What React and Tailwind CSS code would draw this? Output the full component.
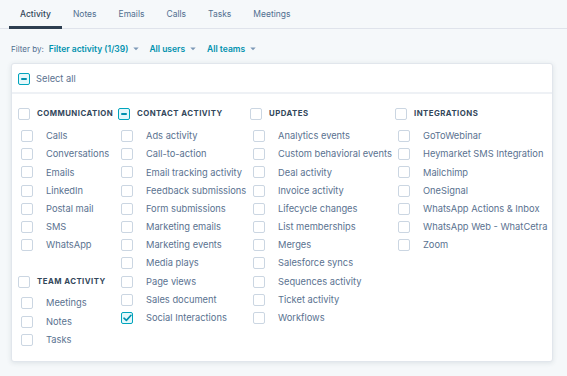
import React from "react";

const font = { fontFamily: "Inter, 'Noto Sans', sans-serif" };

function Box({ state = "none", className = "" }) {
  if (state === "checked") {
    return (
      <span className={`flex h-[12px] w-[12px] shrink-0 items-center justify-center rounded-[2px] border border-[#00a4bd] bg-[#e5f8fb] ${className}`}>
        <svg width="9" height="8" viewBox="0 0 9 8" fill="none">
          <path d="M1 4.2 L3.4 6.4 L8 1.3" stroke="#0091ae" strokeWidth="1.6" strokeLinecap="round" strokeLinejoin="round" />
        </svg>
      </span>
    );
  }
  if (state === "mixed") {
    return (
      <span className={`flex h-[12px] w-[12px] shrink-0 items-center justify-center rounded-[2px] border border-[#00a4bd] bg-[#e5f8fb] ${className}`}>
        <span className="h-[2px] w-[6px] rounded-[1px] bg-[#0091ae]" />
      </span>
    );
  }
  return <span className={`h-[12px] w-[12px] shrink-0 rounded-[2px] border border-[#cbd6e2] bg-white ${className}`} />;
}

function Header({ label, state }) {
  return (
    <div className="flex h-[12px] items-center gap-[7px]">
      <Box state={state} />
      <span className="text-[7.8px] font-bold uppercase tracking-[0.06em] text-[#33475b] whitespace-nowrap">{label}</span>
    </div>
  );
}

function Item({ label, state }) {
  return (
    <div className="flex h-[18.2px] items-center gap-[13px] pl-[3px]">
      <Box state={state} />
      <span className="text-[9.3px] text-[#5a7290] whitespace-nowrap">{label}</span>
    </div>
  );
}

function Column({ header, headerState, items, checked = [] }) {
  return (
    <div className="flex flex-col">
      <Header label={header} state={headerState} />
      <div className="mt-[7px] flex flex-col">
        {items.map((it) => (
          <Item key={it} label={it} state={checked.includes(it) ? "checked" : "none"} />
        ))}
      </div>
    </div>
  );
}

function Caret() {
  return (
    <svg width="6" height="4" viewBox="0 0 6 4" className="ml-[5px]">
      <path d="M0.3 0.5 L3 3.3 L5.7 0.5 Z" fill="#7c98b6" />
    </svg>
  );
}

export default function App() {
  const tabs = ["Activity", "Notes", "Emails", "Calls", "Tasks", "Meetings"];
  return (
    <div style={font} className="h-[376px] w-[567px] overflow-hidden bg-[#f5f8fa]">
      <div className="flex h-[29px] border-b border-[#dfe3eb] pl-[9px]">
        {tabs.map((t, i) => (
          <div
            key={t}
            className={`flex h-[29px] items-center px-[11px] text-[8.5px] ${
              i === 0 ? "border-b-[3px] border-[#2d3e50] pt-[3px] font-medium text-[#33475b]" : "text-[#516f90]"
            }`}
          >
            {t}
          </div>
        ))}
      </div>
      <div className="flex h-[34px] items-center pl-[11px] pt-[6px]">
        <span className="text-[8px] text-[#516f90]">Filter by:</span>
        <span className="ml-[5px] flex items-center text-[8.5px] font-semibold text-[#0091ae]">
          Filter activity (1/39)
          <Caret />
        </span>
        <span className="ml-[10px] flex items-center text-[8.5px] font-semibold text-[#0091ae]">
          All users
          <Caret />
        </span>
        <span className="ml-[11px] flex items-center text-[8.5px] font-semibold text-[#0091ae]">
          All teams
          <Caret />
        </span>
      </div>
      <div className="ml-[11px] h-[299px] w-[542px] rounded-[3px] border border-[#e1e6ec] bg-white shadow-[0_1px_5px_rgba(45,62,80,0.12)]">
        <div className="flex h-[30px] items-center gap-[6px] border-b-2 border-[#eef1f5] pl-[6px] pt-[2px]">
          <Box state="mixed" />
          <span className="text-[9.3px] text-[#5a7290]">Select all</span>
        </div>
        <div className="grid grid-cols-[100px_132px_145px_1fr] pl-[6px] pt-[14px]">
          <div className="flex flex-col">
            <Column
              header="Communication"
              items={["Calls", "Conversations", "Emails", "LinkedIn", "Postal mail", "SMS", "WhatsApp"]}
            />
            <div className="mt-[22px]">
              <Header label="Team activity" />
              <div className="mt-[6px] flex flex-col">
                {["Meetings", "Notes", "Tasks"].map((it) => (
                  <Item key={it} label={it} />
                ))}
              </div>
            </div>
          </div>
          <Column
            header="Contact activity"
            headerState="mixed"
            items={[
              "Ads activity",
              "Call-to-action",
              "Email tracking activity",
              "Feedback submissions",
              "Form submissions",
              "Marketing emails",
              "Marketing events",
              "Media plays",
              "Page views",
              "Sales document",
              "Social Interactions",
            ]}
            checked={["Social Interactions"]}
          />
          <Column
            header="Updates"
            items={[
              "Analytics events",
              "Custom behavioral events",
              "Deal activity",
              "Invoice activity",
              "Lifecycle changes",
              "List memberships",
              "Merges",
              "Salesforce syncs",
              "Sequences activity",
              "Ticket activity",
              "Workflows",
            ]}
          />
          <Column
            header="Integrations"
            items={[
              "GoToWebinar",
              "Heymarket SMS Integration",
              "Mailchimp",
              "OneSignal",
              "WhatsApp Actions & Inbox",
              "WhatsApp Web - WhatCetra",
              "Zoom",
            ]}
          />
        </div>
      </div>
    </div>
  );
}
